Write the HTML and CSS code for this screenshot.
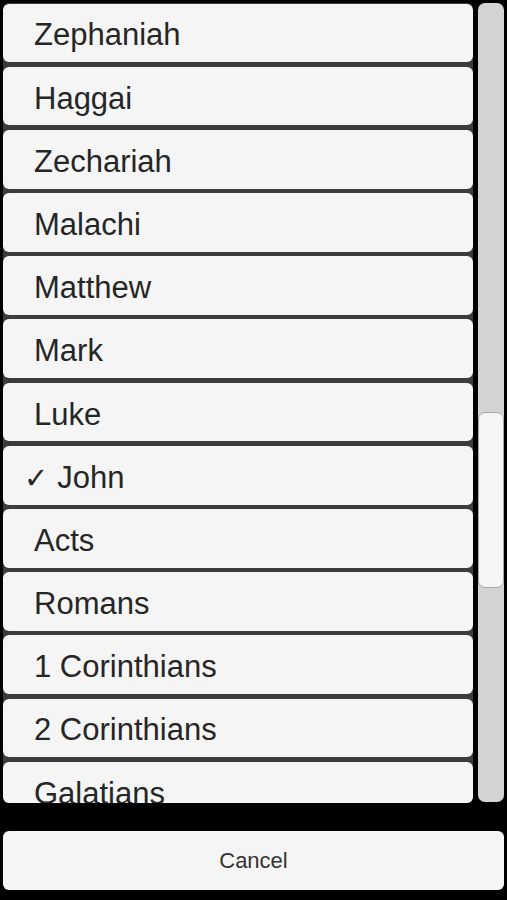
FILE: index.html
```html
<!DOCTYPE html>
<html>
<head>
<meta charset="utf-8">
<link rel="stylesheet" href="styles.css">
</head>
<body>
<div class="screen">
  <div class="top">
    <div class="list">
      <div class="item">Zephaniah</div>
      <div class="item">Haggai</div>
      <div class="item">Zechariah</div>
      <div class="item">Malachi</div>
      <div class="item">Matthew</div>
      <div class="item">Mark</div>
      <div class="item">Luke</div>
      <div class="item checked"><span class="check">✓</span>John</div>
      <div class="item">Acts</div>
      <div class="item">Romans</div>
      <div class="item">1 Corinthians</div>
      <div class="item">2 Corinthians</div>
      <div class="item">Galatians</div>
    </div>
    <div class="scrollbar">
      <div class="track-top"></div>
      <div class="thumb"></div>
    </div>
  </div>
  <div class="cancel">Cancel</div>
</div>
</body>
</html>
```
FILE: styles.css
```css
html, body {
  margin: 0;
  padding: 0;
  background: #000;
}
.screen {
  width: 507px;
  height: 900px;
  background: #000;
  display: flex;
  flex-direction: column;
  padding: 3px 3px 0 3px;
  box-sizing: border-box;
  font-family: "Liberation Sans", Arial, sans-serif;
}
.top {
  display: flex;
  height: 800px;
  gap: 5px;
}
.list {
  width: 470px;
  height: 800px;
  overflow: hidden;
  background: #3c3c3c;
  border-radius: 6px;
  display: flex;
  flex-direction: column;
  gap: 4.4px;
  padding-top: 0.5px;
  box-sizing: border-box;
}
.item {
  flex: 0 0 58.8px;
  background: #f5f5f5;
  border-radius: 6px;
  display: flex;
  align-items: center;
  padding-left: 31px;
  padding-top: 5px;
  font-size: 31px;
  color: #262626;
  box-sizing: border-box;
}
.item.checked {
  padding-left: 21px;
}
.check {
  font-family: "DejaVu Sans", sans-serif;
  font-size: 29px;
  margin-right: 9px;
}
.scrollbar {
  width: 26px;
  height: 799px;
  background: #d3d3d3;
  border-radius: 7px;
  display: flex;
  flex-direction: column;
}
.track-top {
  flex: 0 0 409px;
}
.thumb {
  flex: 0 0 176px;
  background: #f5f5f5;
  border: 1px solid #a8a8a8;
  border-radius: 7px;
  box-sizing: border-box;
}
.cancel {
  margin-top: 28px;
  height: 59px;
  background: #f5f5f5;
  border-radius: 6px;
  display: flex;
  align-items: center;
  justify-content: center;
  font-size: 22px;
  color: #333;
}
```
